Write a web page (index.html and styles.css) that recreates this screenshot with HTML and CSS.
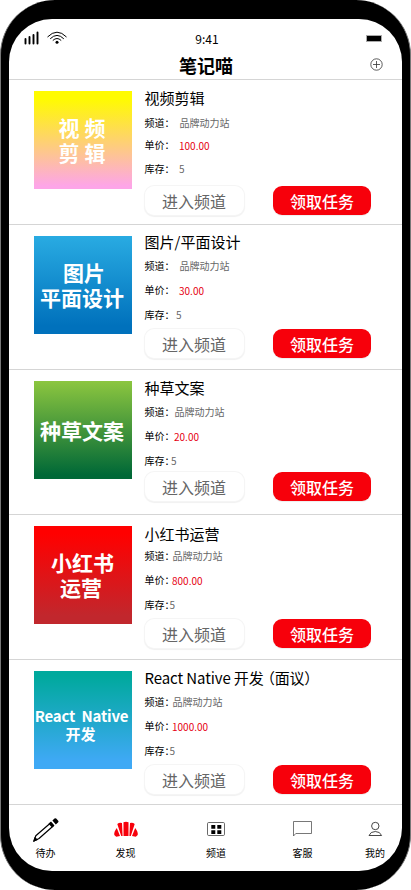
FILE: index.html
```html
<!DOCTYPE html>
<html lang="zh-CN">
<head>
<meta charset="utf-8">
<title>笔记喵</title>
<link rel="stylesheet" href="styles.css">
</head>
<body>
<div class="phone">
  <main class="screen">
    <header class="top">
      <div class="status">
        <div class="signals">
          <svg class="bars" width="16" height="14" viewBox="0 0 16 14" stroke="#000" stroke-width="1.9" stroke-linecap="round"><path d="M1.500 8v4.500M5.500 6v6.500M9.500 4v8.500M13.500 1.500v11"/></svg>
          <svg class="wifi" width="20" height="14" viewBox="0 0 20 14" fill="none" stroke="#000" stroke-width="1"><path d="M.5 6Q10-3.600 19.500 6M3.200 7.800q6.800-6.800 13.600 0M5.800 9.500q4.200-4 8.400 0"/><circle cx="10" cy="11.200" r="1.500" fill="#000" stroke="none"/></svg>
        </div>
        <time class="clock">9:41</time>
        <span class="battery"></span>
      </div>
      <div class="titlebar">
        <h1>笔记喵</h1>
        <svg class="add" width="13" height="13" viewBox="0 0 13 13" fill="none" stroke="#333" stroke-width=".8"><circle cx="6.500" cy="6.500" r="5.700"/><path d="M6.500 3v7M3 6.500h7"/></svg>
      </div>
    </header>

    <section class="card card-video">
      <div class="thumb">视 频<br>剪 辑</div>
      <div class="info">
        <h2>视频剪辑</h2>
        <p><b>频道：</b><span>品牌动力站</span></p>
        <p class="price"><b>单价：</b><span>100.00</span></p>
        <p class="stock"><b>库存：</b><span>5</span></p>
        <div class="actions"><button class="enter">进入频道</button><button class="take">领取任务</button></div>
      </div>
    </section>

    <section class="card card-design">
      <div class="thumb"><span class="shift">图片</span>平面设计</div>
      <div class="info">
        <h2>图片/平面设计</h2>
        <p><b>频道：</b><span>品牌动力站</span></p>
        <p class="price"><b>单价：</b><span>30.00</span></p>
        <p class="stock"><b>库存：</b><span>5</span></p>
        <div class="actions"><button class="enter">进入频道</button><button class="take">领取任务</button></div>
      </div>
    </section>

    <section class="card card-copy">
      <div class="thumb">种草文案</div>
      <div class="info">
        <h2>种草文案</h2>
        <p><b>频道：</b><span>品牌动力站</span></p>
        <p class="price"><b>单价：</b><span>20.00</span></p>
        <p class="stock"><b>库存：</b><span>5</span></p>
        <div class="actions"><button class="enter">进入频道</button><button class="take">领取任务</button></div>
      </div>
    </section>

    <section class="card card-red">
      <div class="thumb"><span class="shift">小红书</span>运营</div>
      <div class="info">
        <h2>小红书运营</h2>
        <p><b>频道：</b><span>品牌动力站</span></p>
        <p class="price"><b>单价：</b><span>800.00</span></p>
        <p class="stock"><b>库存：</b><span>5</span></p>
        <div class="actions"><button class="enter">进入频道</button><button class="take">领取任务</button></div>
      </div>
    </section>

    <section class="card card-react">
      <div class="thumb"><span class="shift">React&nbsp; Native</span>开发</div>
      <div class="info">
        <h2><span class="latin">React Native </span>开发<span class="note">（面议）</span></h2>
        <p><b>频道：</b><span>品牌动力站</span></p>
        <p class="price"><b>单价：</b><span>1000.00</span></p>
        <p class="stock"><b>库存：</b><span>5</span></p>
        <div class="actions"><button class="enter">进入频道</button><button class="take">领取任务</button></div>
      </div>
    </section>

    <nav class="tabs">
      <a class="tab">
        <svg width="28" height="26" viewBox="0 0 28 26"><path d="M2 24 3.800 18.800 18.500 6 21.200 9 7 21.500Z" fill="#fff" stroke="#000" stroke-width="1.200" stroke-linejoin="round"/><path d="M1 25 2.600 20 6.300 22.800ZM16.500 6.800 19 4.500 22.500 8.400 20 10.500ZM20.400 3.600 22.500 1.600Q23.400.8 24.200 1.600L26.200 3.800Q27 4.700 26 5.500L23.800 7.500Z"/></svg>
        <span>待办</span>
      </a>
      <a class="tab">
        <svg width="28" height="26" viewBox="0 0 28 26" fill="#f7000b"><path d="M11.500 5.300Q14 4 16.500 5.300V19H11.500ZM5.300 7Q7.500 5 10 6L10.600 19H9.200ZM22.700 7Q20.500 5 18 6L17.400 19H18.800ZM4.800 11Q1.700 15 2.300 18L4.200 19.800 8 19ZM23.200 11Q26.300 15 25.700 18L23.800 19.800 20 19Z"/></svg>
        <span>发现</span>
      </a>
      <a class="tab">
        <svg width="28" height="26" viewBox="0 0 28 26"><rect x="5.500" y="5.500" width="17" height="13" rx="1.200" fill="none" stroke="#444" stroke-width=".8"/><path d="M9.300 8h4v3.700h-4zM15.300 8h4v3.700h-4zM9.300 13.200h4v3.800h-4zM15.300 13.200h4v3.800h-4z"/></svg>
        <span>频道</span>
      </a>
      <a class="tab">
        <svg width="28" height="26" viewBox="0 0 28 26" fill="none" stroke="#555" stroke-width=".8"><path d="M4.500 19V4.500H22.500V16.500H6.800Z"/></svg>
        <span>客服</span>
      </a>
      <a class="tab">
        <svg width="28" height="26" viewBox="0 0 28 26" fill="none" stroke="#333" stroke-width=".9"><circle cx="14.300" cy="9" r="3.700"/><path d="M8 18.500Q9.500 14.500 14.300 14.500T20.600 18.500Z"/></svg>
        <span>我的</span>
      </a>
    </nav>
  </main>
</div>
</body>
</html>
```
FILE: styles.css
```css
* { box-sizing: border-box; }
body {
  margin: 0;
  background: #fff;
  color: #000;
  font-family: "Noto Sans CJK SC", "Noto Sans", sans-serif;
}
h1, h2, p { margin: 0; font-weight: 400; }
.phone {
  width: 411px;
  height: 890px;
  padding: 19px 8px;
  background: #000;
  border: solid #777;
  border-width: 0 1px;
  border-radius: 55px;
}
.screen {
  width: 393px;
  height: 852px;
  background: #fff;
  border-radius: 43px;
  overflow: hidden;
}
.top { height: 61px; border-bottom: 1px solid #d5d5d5; }
.status {
  display: grid;
  grid-template-columns: 1fr auto 1fr;
  align-items: center;
  height: 36px;
  padding: 4px 20px 0 15px;
}
.signals { display: flex; gap: 7px; align-items: center; margin-top: -2px; }
.clock { font-size: 12px; line-height: 20px; margin-left: 8px; }
.battery {
  justify-self: end;
  width: 16px;
  height: 7px;
  background: #000;
  border: 1px solid #aaa;
  margin-top: -2px;
}
.titlebar {
  display: grid;
  grid-template-columns: 1fr auto 1fr;
  align-items: center;
  height: 20px;
  padding: 0 19px 0 20px;
}
h1 { grid-column: 2; font-size: 18px; font-weight: 700; line-height: 20px; }
.add { grid-column: 3; justify-self: end; margin-top: -1px; }

.card {
  display: flex;
  gap: 12.5px;
  height: 145px;
  padding-left: 25px;
  border-bottom: 1px solid #d5d5d5;
}
.thumb {
  display: flex;
  flex-direction: column;
  align-items: center;
  justify-content: center;
  flex: none;
  width: 98px;
  height: 98px;
  margin-top: 11px;
  padding-right: 2px;
  color: #fff;
  font-size: 21px;
  font-weight: 700;
  line-height: 25px;
  text-align: center;
  white-space: nowrap;
}
.info { display: grid; align-content: start; }
h2 { font-size: 15px; line-height: 20px; white-space: nowrap; }
.latin { letter-spacing: -.1px; }
.note { margin-left: -4px; letter-spacing: -.2px; }
.info p { display: flex; font-size: 10px; line-height: 20px; color: #666; }
.info b {
  width: var(--channel);
  color: #000;
  font-weight: 400;
  font-feature-settings: "halt";
  white-space: nowrap;
}
.info .price b { width: var(--price); }
.info .stock b { width: var(--stock); }
.price span { color: #e60012; padding-top: 1px; }
.actions { display: flex; gap: 29.5px; }
button {
  height: 29px;
  padding: 0;
  border: 0;
  border-radius: 9px;
  font: 500 16px/31px "Noto Sans CJK SC", sans-serif;
}
.enter {
  width: 99px;
  color: #666;
  font-weight: 400;
  background: #fff;
  box-shadow: 0 0 0 1px #f5f5f5, 0 1px 1px 1px #f1f1f1;
}
.take { width: 98px; color: #fff; background: #f7000b; box-shadow: 0 1px 1px #eee; }

.card-video { --channel: 35px; --price: 34.5px; --stock: 34.5px; }
.card-video .info { padding-top: 8px; grid-template-rows: 25px 22px 24px 27px 29px; }
.card-video .thumb { display: block; padding-top: 24px; background: linear-gradient(#fffb00 8%, #fda5e8 97%); }

.card-design { --channel: 35px; --price: 34.5px; --stock: 31.5px; }
.card-design .info { padding-top: 7px; grid-template-rows: 24px 24px 25px 24px 29px; }
.card-design .thumb { background: linear-gradient(#29abe2, #0071bc 92%); }
.card-design .shift { padding-left: 4px; }

.card-copy { --channel: 30px; --price: 29.5px; --stock: 26.5px; }
.card-copy .info { padding-top: 8px; grid-template-rows: 24px 24px 25px 21px 29px; }
.card-copy .thumb { background: linear-gradient(#8cc63f, #006837 96%); }

.card-red { --channel: 28px; --price: 27.5px; --stock: 25px; }
.card-red .info { padding-top: 9px; grid-template-rows: 22px 24px 25px 24px 29px; }
.card-red .thumb { background: linear-gradient(#ff0000 8%, #c1272d 92%); padding-right: 4px; }
.card-red .shift { padding-left: 3px; }

.card-react { --channel: 28px; --price: 27.5px; --stock: 25px; }
.card-react .info { padding-top: 8px; grid-template-rows: 24px 24px 25px 24px 29px; }
.card-react .thumb {
  padding: 10px 5px 0 0;
  background: linear-gradient(#00a99d 5%, #3fa9f5 92%);
  font-size: 15px;
  line-height: 18px;
}
.card-react .shift { padding-left: 2px; letter-spacing: -.2px; }

.tabs {
  display: grid;
  grid-template-columns: 73px 87px 94px 79px 66px;
  width: 399px;
  padding-top: 12px;
}
.tab { display: flex; flex-direction: column; align-items: center; }
.tab svg { display: block; }
.tab span { font-size: 10px; line-height: 20px; }
```
